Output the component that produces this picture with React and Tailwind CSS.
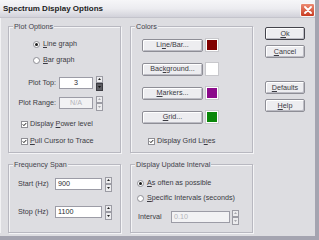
import React from 'react';

const U = ({ children }) => <span className="underline underline-offset-[1px] decoration-[0.5px]">{children}</span>;

const Group = ({ label, className = '', children }) => (
  <div className={`relative border border-[#b8b8c0] shadow-[inset_1px_1px_0_#f4f4f6,1px_1px_0_#f4f4f6] ${className}`}>
    <span className="absolute left-[4px] top-[-5px] px-[1px] bg-[#dddde1] leading-[9px] text-[#44444c]">{label}</span>
    {children}
  </div>
);

const Button = ({ children, className = '', def = false }) => (
  <div
    className={`flex items-center justify-center h-[13px] bg-[#ededf0] rounded-[2px] border ${
      def ? 'border-[#44444c]' : 'border-[#8e8e96]'
    } shadow-[inset_1px_1px_0_#ffffff,inset_-1px_-1px_0_#bcbcc4] text-[#3a3a42] leading-[10px] ${className}`}
  >
    {children}
  </div>
);

const Radio = ({ checked }) => (
  <span className="flex items-center justify-center w-[7px] h-[7px] rounded-full border border-[#8e8e94] bg-white shrink-0">
    {checked && <span className="w-[3px] h-[3px] rounded-full bg-[#1a1a1a]" />}
  </span>
);

const Check = () => (
  <span className="flex items-center justify-center w-[7px] h-[7px] border border-[#8e8e94] bg-white shrink-0">
    <svg width="5" height="5" viewBox="0 0 5 5">
      <path d="M0.8 2.4 L1.9 3.6 L4.2 1.1" fill="none" stroke="#111" strokeWidth="1" />
    </svg>
  </span>
);

const Spin = ({ disabled = false, pressed = false, className = '' }) => {
  const arrow = disabled ? '#a8a8ae' : '#222';
  return (
    <div className={`flex flex-col w-[7px] h-[15px] shrink-0 ${className}`}>
      <div className="flex-1 flex items-center justify-center bg-[#ececee] border border-[#9c9ca4]">
        <svg width="3" height="2" viewBox="0 0 3 2"><path d="M1.5 0 L3 2 L0 2 Z" fill={arrow} /></svg>
      </div>
      <div
        className={`flex-1 flex items-center justify-center border ${
          pressed ? 'bg-[#5c5c62] border-[#3c3c42]' : 'bg-[#ececee] border-[#9c9ca4]'
        }`}
      >
        <svg width="3" height="2" viewBox="0 0 3 2"><path d="M0 0 L3 0 L1.5 2 Z" fill={pressed ? '#111' : arrow} /></svg>
      </div>
    </div>
  );
};

const Input = ({ value, disabled = false, center = false, className = '' }) => (
  <div
    className={`flex items-center h-[12px] border border-[#9c9ca6] ${
      disabled ? 'bg-[#f2f2f4] text-[#b4b4ba]' : 'bg-white text-[#2a2a30]'
    } ${center ? 'justify-center' : 'pl-[2px]'} leading-[10px] ${className}`}
  >
    {value}
  </div>
);

const Swatch = ({ color }) => (
  <div className="w-[14px] h-[14px] border border-[#c8c8cc] bg-white p-[1px] ml-[2px]">
    <div className={`w-full h-full ${color}`} />
  </div>
);

export default function App() {
  return (
    <div className="w-[319px] h-[240px] flex flex-col overflow-hidden bg-[#dddde1] border-r-[4px] border-b-[4px] border-[#a4a4b0] font-['Liberation_Sans',Arial,sans-serif] text-[7.2px] text-[#3a3a42]">
      {/* title bar */}
      <div className="h-[18px] shrink-0 flex items-center justify-between pl-[3px] bg-gradient-to-b from-[#f6f6f8] via-[#ececf0] to-[#d2d2da] border-b border-[#c4c4cc]">
        <span className="font-bold text-[8px] text-[#1c1c22] leading-[10px]">Spectrum Display Options</span>
        <div className="w-[15px] h-[14px] rounded-[2px] bg-gradient-to-b from-[#ec8a72] to-[#c83a20] border border-[#f8f8f8] flex items-center justify-center mt-[2px]">
          <svg width="8" height="8" viewBox="0 0 8 8">
            <path d="M1 1 L7 7 M7 1 L1 7" stroke="#fff" strokeWidth="1.8" strokeLinecap="round" />
          </svg>
        </div>
      </div>

      {/* body */}
      <div className="flex pt-[8px] pl-[7px] border-l-[1px] border-[#f2f2f4]">
        {/* left column */}
        <div className="flex flex-col w-[113px]">
          <Group label="Plot Options" className="h-[127px]">
            <div className="flex flex-col pt-[12px]">
              <div className="flex items-center h-[10px] pl-[24px] gap-[3px]">
                <Radio checked />
                <span><U>L</U>ine graph</span>
              </div>
              <div className="flex items-center h-[10px] pl-[24px] gap-[3px] mt-[6px]">
                <Radio />
                <span><U>B</U>ar graph</span>
              </div>
              <div className="flex items-center h-[12px] mt-[12px]">
                <span className="w-[47px] text-right">Plot Top:</span>
                <Input value="3" center className="w-[34px] ml-[3px]" />
                <Spin pressed className="ml-[3px]" />
              </div>
              <div className="flex items-center h-[12px] mt-[8px]">
                <span className="w-[47px] text-right">Plot Range:</span>
                <Input value="N/A" center disabled className="w-[34px] ml-[3px]" />
                <Spin disabled className="ml-[3px]" />
              </div>
              <div className="flex items-center h-[10px] pl-[12px] gap-[2px] mt-[10px]">
                <Check />
                <span>Display <U>P</U>ower level</span>
              </div>
              <div className="flex items-center h-[10px] pl-[12px] gap-[2px] mt-[7px]">
                <Check />
                <span><U>P</U>ull Cursor to Trace</span>
              </div>
            </div>
          </Group>

          <Group label="Frequency Span" className="h-[69px] mt-[11px]">
            <div className="flex flex-col pt-[13px] pl-[9px]">
              <div className="flex items-center h-[12px]">
                <span className="w-[37px]">Start (Hz)</span>
                <Input value="900" className="w-[47px]" />
                <Spin className="ml-[3px]" />
              </div>
              <div className="flex items-center h-[12px] mt-[16px]">
                <span className="w-[37px]">Stop (Hz)</span>
                <Input value="1100" className="w-[47px]" />
                <Spin className="ml-[3px]" />
              </div>
            </div>
          </Group>
        </div>

        {/* middle column */}
        <div className="flex flex-col w-[123px] ml-[9px]">
          <Group label="Colors" className="h-[127px]">
            <div className="flex flex-col pt-[11px] pl-[11px] gap-[10px]">
              <div className="flex items-center h-[14px]">
                <Button className="w-[61px]">Li<U>n</U>e/Bar...</Button>
                <Swatch color="bg-[#800000]" />
              </div>
              <div className="flex items-center h-[14px]">
                <Button className="w-[61px]">Bac<U>k</U>ground...</Button>
                <Swatch color="bg-white" />
              </div>
              <div className="flex items-center h-[14px]">
                <Button className="w-[61px]"><U>M</U>arkers...</Button>
                <Swatch color="bg-[#8b0a8b]" />
              </div>
              <div className="flex items-center h-[14px]">
                <Button className="w-[61px]"><U>G</U>rid...</Button>
                <Swatch color="bg-[#0a870a]" />
              </div>
              <div className="flex items-center h-[10px] pl-[6px] gap-[2px] mt-[2px]">
                <Check />
                <span>Display Grid Li<U>n</U>es</span>
              </div>
            </div>
          </Group>

          <Group label="Display Update Interval" className="h-[69px] mt-[11px]">
            <div className="flex flex-col pt-[13px] pl-[6px]">
              <div className="flex items-center h-[10px] gap-[3px]">
                <Radio checked />
                <span><U>A</U>s often as possible</span>
              </div>
              <div className="flex items-center h-[10px] gap-[3px] mt-[5px]">
                <Radio />
                <span><U>S</U>pecific Intervals (seconds)</span>
              </div>
              <div className="flex items-center h-[12px] mt-[8px] pl-[1px]">
                <span className="w-[33px]">Interval</span>
                <Input value="0.10" disabled className="w-[59px]" />
                <Spin disabled className="ml-[2px]" />
              </div>
            </div>
          </Group>
        </div>

        {/* right column */}
        <div className="flex flex-col w-[40px] ml-[12px] pt-[1px]">
          <Button def className="w-[40px]"><U>O</U>k</Button>
          <Button className="w-[40px] mt-[5px]"><U>C</U>ancel</Button>
          <Button className="w-[40px] mt-[23px]"><U>D</U>efaults</Button>
          <Button className="w-[40px] mt-[5px]"><U>H</U>elp</Button>
        </div>
      </div>
    </div>
  );
}
